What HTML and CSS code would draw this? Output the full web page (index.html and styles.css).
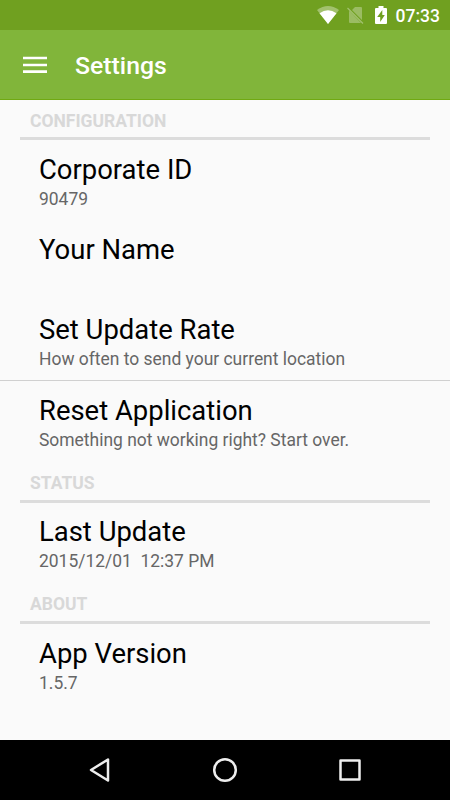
FILE: index.html
```html
<!DOCTYPE html>
<html lang="en"><head><meta charset="utf-8"><title>Settings</title><link rel="stylesheet" href="styles.css"></head>
<body>
<div class="status">
<svg class="wifi" width="22" height="18" viewBox="0 0 22 18"><path d="M0 4Q11-4 22 4L11 18Z" fill="#fff" opacity=".35"/><path d="M2.500 7.200Q11 1.500 19.500 7.200L11 18Z" fill="#fff"/></svg>
<svg class="sim" width="17" height="18" viewBox="0 0 17 18"><path d="M8 1h6q1 0 1 1v12L5 4zM3 5.500L14 17H3q-1 0-1-1V5z" fill="#fff" opacity=".3"/><path d="M.5 2l15.500 15.500" stroke="#fff" stroke-width="1.300" opacity=".35"/></svg>
<svg class="battery" width="12" height="18" viewBox="0 0 12 18"><path d="M3.500 0h5v2H11q1 0 1 1v14q0 1-1 1H1q-1 0-1-1V3q0-1 1-1h2.500z" fill="#fff"/><path d="M7.300 4L2.200 11H5.200V16L9.800 9H7.300z" fill="#70a020"/></svg>
<span class="clock">07:33</span>
</div>
<header class="bar">
<svg class="menu" width="24" height="18" viewBox="0 0 24 18"><path d="M0 2h24M0 9h24M0 15.700h24" stroke="#fff" stroke-width="2.700"/></svg>
<h1>Settings</h1>
</header>
<main>
<h2>CONFIGURATION</h2>
<section class="row"><h3>Corporate ID</h3><p>90479</p></section>
<section class="row"><h3>Your Name</h3><p></p></section>
<section class="row"><h3>Set Update Rate</h3><p>How often to send your current location</p></section>
<section class="row divided"><h3>Reset Application</h3><p>Something not working right? Start over.</p></section>
<h2 class="later">STATUS</h2>
<section class="row raised"><h3>Last Update</h3><p>2015/12/01&nbsp; 12:37 PM</p></section>
<h2 class="later">ABOUT</h2>
<section class="row"><h3>App Version</h3><p>1.5.7</p></section>
</main>
<nav>
<svg width="26" height="26" viewBox="0 0 26 26"><path d="M21 2.500v21L4 13z"/></svg>
<svg width="26" height="26" viewBox="0 0 26 26"><circle cx="13" cy="13" r="10.800"/></svg>
<svg width="26" height="26" viewBox="0 0 26 26"><path d="M3.500 3.500h19v19h-19z"/></svg>
</nav>
</body></html>
```
FILE: styles.css
```css
*{box-sizing:border-box;margin:0;padding:0}
body{width:450px;height:800px;display:flex;flex-direction:column;font-family:Roboto,sans-serif;background:#fafafa;overflow:hidden}
.status{height:30px;background:#70a020;display:flex;align-items:center;padding-left:317px;color:#fff;flex:none}
.sim{margin-left:8px}
.battery{margin-left:10.5px}
.clock{font-size:17.5px;font-weight:500;margin-left:9px;margin-top:2px}
.bar{height:70px;background:#81b53a;border-bottom:1px solid #70a912;display:flex;align-items:center;padding-left:23px;color:#fff;flex:none}
.bar h1{font-size:24.8px;font-weight:500;margin-left:28px;line-height:66px;padding-top:2px}
.menu{margin-top:1px}
main{flex:1}
h2{height:40px;margin:0 20px;padding:10px 10px 0;border-bottom:3px solid #dcdcdc;font-size:17.5px;line-height:22px;color:#d8d8d8;font-weight:700}
.later{height:41px}
.row{height:80px;padding:13px 39px 0}
.row h3{font-size:27.45px;line-height:34px;font-weight:400;color:#000}
.row p{font-size:17.45px;line-height:25px;color:#666}
.divided{height:82px;border-top:1px solid #d0d0d0}
.raised{padding-top:12px}
nav{height:60px;background:#000;display:flex;justify-content:space-around;align-items:center;padding:0 37px;flex:none}
nav svg{fill:none;stroke:#eee;stroke-width:2.5;stroke-linejoin:round}
```
